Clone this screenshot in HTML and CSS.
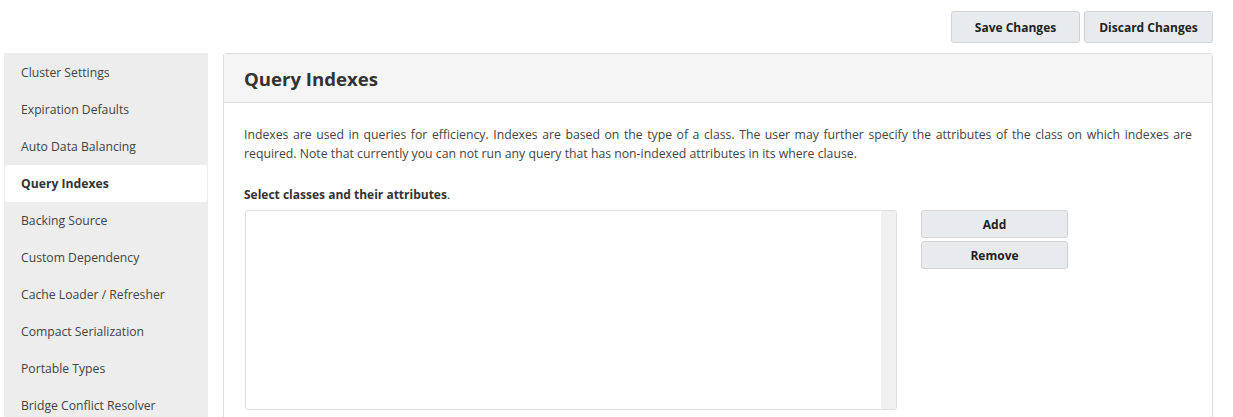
FILE: index.html
```html
<!DOCTYPE html>
<html>
<head>
<meta charset="utf-8">
<link rel="stylesheet" href="styles.css">
</head>
<body>
<div class="page">
  <div class="toolbar">
    <button class="btn">Save Changes</button>
    <button class="btn">Discard Changes</button>
  </div>
  <div class="main">
    <nav class="sidebar">
      <div class="nav-item">Cluster Settings</div>
      <div class="nav-item">Expiration Defaults</div>
      <div class="nav-item">Auto Data Balancing</div>
      <div class="nav-item active">Query Indexes</div>
      <div class="nav-item">Backing Source</div>
      <div class="nav-item">Custom Dependency</div>
      <div class="nav-item">Cache Loader / Refresher</div>
      <div class="nav-item">Compact Serialization</div>
      <div class="nav-item">Portable Types</div>
      <div class="nav-item">Bridge Conflict Resolver</div>
    </nav>
    <section class="panel">
      <div class="panel-header">Query Indexes</div>
      <div class="panel-body">
        <p class="desc">Indexes are used in queries for efficiency. Indexes are based on the type of a class. The user may further specify the attributes of the class on which indexes are required. Note that currently you can not run any query that has non-indexed attributes in its where clause.</p>
        <div class="label"><b>Select classes and their attributes</b>.</div>
        <div class="editor">
          <div class="listbox"><div class="list-area"></div><div class="scroll"></div></div>
          <div class="actions">
            <button class="btn small">Add</button>
            <button class="btn small">Remove</button>
          </div>
        </div>
      </div>
    </section>
  </div>
</div>
</body>
</html>
```
FILE: styles.css
```css
* { box-sizing: border-box; }
html, body { margin: 0; padding: 0; background: #fff; }
body {
  font-family: "Open Sans", "Noto Sans", sans-serif;
  font-size: 12px;
  color: #333;
  overflow: hidden;
  height: 417px;
}
.page { padding: 11px 20px 0 4px; }
.toolbar {
  display: flex;
  justify-content: flex-end;
  gap: 4px;
  height: 32px;
}
.btn {
  font-family: inherit;
  font-size: 12px;
  font-weight: 700;
  color: #222;
  background: #e8ebee;
  border: 1px solid #cfd3d7;
  border-radius: 3px;
  width: 129px;
  height: 32px;
  padding: 0;
}
.main {
  display: flex;
  margin-top: 10px;
  gap: 15px;
  align-items: flex-start;
}
.sidebar {
  width: 204px;
  background: #ededed;
  padding: 1px 1px 0;
  flex-shrink: 0;
  height: 370px;
}
.nav-item {
  height: 37px;
  line-height: 37px;
  padding-left: 16px;
  color: #444;
  font-size: 12.2px;
}
.nav-item.active {
  background: #fff;
  font-weight: 700;
  color: #333;
  border-radius: 3px;
}
.panel {
  flex: 1;
  border: 1px solid #ddd;
  border-radius: 3px;
  height: 380px;
}
.panel-header {
  background: #f5f5f5;
  border-bottom: 1px solid #ddd;
  height: 49px;
  padding: 13px 20px 0;
  font-size: 18.6px;
  font-weight: 700;
  color: #333;
  line-height: 24px;
}
.panel-body { padding: 22px 20px 0; }
.desc {
  margin: 0;
  text-align: justify;
  line-height: 19px;
  color: #444;
  font-size: 12.25px;
}
.label { margin-top: 23px; line-height: 18px; color: #333; }
.editor {
  display: flex;
  gap: 24px;
  margin-top: 6px;
  padding-left: 1px;
  align-items: flex-start;
}
.listbox {
  width: 652px;
  height: 200px;
  border: 1px solid #ddd;
  border-radius: 3px;
  display: flex;
  overflow: hidden;
}
.list-area { flex: 1; }
.scroll { width: 15px; background: #f0f0f0; }
.actions { display: flex; flex-direction: column; gap: 3px; }
.btn.small { width: 147px; height: 28px; }
```
